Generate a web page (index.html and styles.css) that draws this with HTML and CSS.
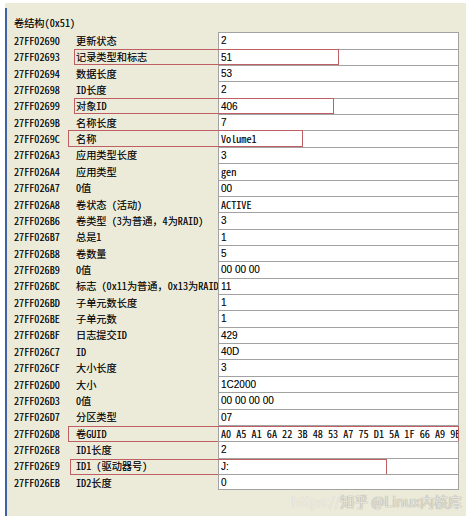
FILE: index.html
```html
<!DOCTYPE html>
<html lang="zh-CN">
<head>
<meta charset="utf-8">
<title>卷结构</title>
<link rel="stylesheet" href="styles.css">
</head>
<body>
<div class="panel">
  <div class="frame">
    <div class="title">卷结构(0x51)</div>
    <div class="table">
      <div class="row"><span class="addr">27FF02690</span><span class="name">更新状态</span><span class="val">2</span></div>
      <div class="row"><span class="addr">27FF02693</span><span class="name">记录类型和标志</span><span class="val">51</span><span class="hl hl-1"></span></div>
      <div class="row"><span class="addr">27FF02694</span><span class="name">数据长度</span><span class="val">53</span></div>
      <div class="row"><span class="addr">27FF02698</span><span class="name">ID长度</span><span class="val">2</span></div>
      <div class="row"><span class="addr">27FF02699</span><span class="name">对象ID</span><span class="val">406</span><span class="hl hl-2"></span></div>
      <div class="row"><span class="addr">27FF0269B</span><span class="name">名称长度</span><span class="val">7</span></div>
      <div class="row"><span class="addr">27FF0269C</span><span class="name">名称</span><span class="val ser">Volume1</span><span class="hl hl-3"></span></div>
      <div class="row"><span class="addr">27FF026A3</span><span class="name">应用类型长度</span><span class="val">3</span></div>
      <div class="row"><span class="addr">27FF026A4</span><span class="name">应用类型</span><span class="val ser">gen</span></div>
      <div class="row"><span class="addr">27FF026A7</span><span class="name">0值</span><span class="val">00</span></div>
      <div class="row"><span class="addr">27FF026A8</span><span class="name">卷状态 (活动)</span><span class="val ser">ACTIVE</span></div>
      <div class="row"><span class="addr">27FF026B6</span><span class="name">卷类型 (3为普通，4为RAID)</span><span class="val">3</span></div>
      <div class="row"><span class="addr">27FF026B7</span><span class="name">总是1</span><span class="val">1</span></div>
      <div class="row"><span class="addr">27FF026B8</span><span class="name">卷数量</span><span class="val">5</span></div>
      <div class="row"><span class="addr">27FF026B9</span><span class="name">0值</span><span class="val">00 00 00</span></div>
      <div class="row"><span class="addr">27FF026BC</span><span class="name">标志 (0x11为普通，0x13为RAID)</span><span class="val">11</span></div>
      <div class="row"><span class="addr">27FF026BD</span><span class="name">子单元数长度</span><span class="val">1</span></div>
      <div class="row"><span class="addr">27FF026BE</span><span class="name">子单元数</span><span class="val">1</span></div>
      <div class="row"><span class="addr">27FF026BF</span><span class="name">日志提交ID</span><span class="val">429</span></div>
      <div class="row"><span class="addr">27FF026C7</span><span class="name">ID</span><span class="val">40D</span></div>
      <div class="row"><span class="addr">27FF026CF</span><span class="name">大小长度</span><span class="val">3</span></div>
      <div class="row"><span class="addr">27FF026D0</span><span class="name">大小</span><span class="val">1C2000</span></div>
      <div class="row"><span class="addr">27FF026D3</span><span class="name">0值</span><span class="val">00 00 00 00</span></div>
      <div class="row"><span class="addr">27FF026D7</span><span class="name">分区类型</span><span class="val">07</span></div>
      <div class="row"><span class="addr">27FF026D8</span><span class="name">卷GUID</span><span class="val ser">A0 A5 A1 6A 22 3B 48 53 A7 75 D1 5A 1F 66 A9 9B</span><span class="hl hl-4"></span></div>
      <div class="row"><span class="addr">27FF026E8</span><span class="name">ID1长度</span><span class="val">2</span></div>
      <div class="row"><span class="addr">27FF026E9</span><span class="name">ID1 (驱动器号)</span><span class="val">J:</span><span class="hl hl-5"></span></div>
      <div class="row last"><span class="addr">27FF026EB</span><span class="name">ID2长度</span><span class="val">0</span></div>
    </div>
  </div>
  <div class="wm"><span class="wm-url">https://</span>知乎 @Linux内核库</div>
</div>
</body>
</html>
```

FILE: styles.css
```css
html, body {
  margin: 0;
  padding: 0;
  background: #ffffff;
}
body {
  width: 474px;
  height: 524px;
  overflow: hidden;
  font-family: "Noto Sans Mono CJK SC", "Noto Sans CJK SC", monospace;
  font-size: 10.2px;
  color: #0c0c0c;
}
.panel {
  position: relative;
  box-sizing: border-box;
  margin: 3px 0 0 5px;
  width: 461px;
  height: 513px;
  padding-top: 5px;
  background: #ecead9;
}
.frame {
  box-sizing: border-box;
  height: 508px;
  border-left: 2px solid #3f62a4;
  padding-left: 7px;
}
.title {
  box-sizing: border-box;
  height: 24.3px;
  padding-top: 8px;
  line-height: 14px;
  white-space: nowrap;
  text-shadow: 0 0 0.5px rgba(0, 0, 0, 0.5);
}
.table {
  display: flex;
  flex-direction: column;
}
.row {
  position: relative;
  display: grid;
  grid-template-columns: 62px 142px 241px;
  height: 16.37px;
  line-height: 15px;
}
.addr, .name {
  white-space: nowrap;
  overflow: hidden;
  align-self: center;
  text-shadow: 0 0 0.5px rgba(0, 0, 0, 0.5);
}
.val {
  box-sizing: border-box;
  background: #ffffff;
  border: 1px solid #a2a2a2;
  border-bottom: none;
  padding-left: 2px;
  white-space: nowrap;
  overflow: hidden;
  font-family: "Liberation Sans", "DejaVu Sans", sans-serif;
  font-size: 10px;
  line-height: 15px;
  text-shadow: 0 0 0.5px rgba(0, 0, 0, 0.4);
}
.val.ser {
  font-family: "Noto Sans Mono CJK SC", "Liberation Mono", monospace;
  font-size: 10.2px;
}
.row.last .val {
  border-bottom: 1px solid #a2a2a2;
}
.hl {
  position: absolute;
  top: 0;
  bottom: 0;
  box-sizing: border-box;
  border: 1px solid #bf5e63;
}
.hl-1 { left: 60px; width: 265px; }
.hl-2 { left: 60px; width: 260px; }
.hl-3 { left: 54px; width: 235px; }
.hl-4 { left: 54px; width: 391px; top: 1px; bottom: -1px; }
.hl-5 { left: 56px; width: 317px; top: 1px; bottom: -1px; }
.wm {
  position: absolute;
  right: 4px;
  bottom: 7px;
  font-family: "Noto Sans CJK SC", sans-serif;
  font-size: 14px;
  line-height: 16px;
  color: #e6e4dc;
  text-shadow: 0 0 1px #a6a59e, 0 0 1px #a6a59e;
  white-space: nowrap;
}
.wm-url {
  color: #eeece4;
  text-shadow: 0 0 1px #c8c7c0;
}
```
